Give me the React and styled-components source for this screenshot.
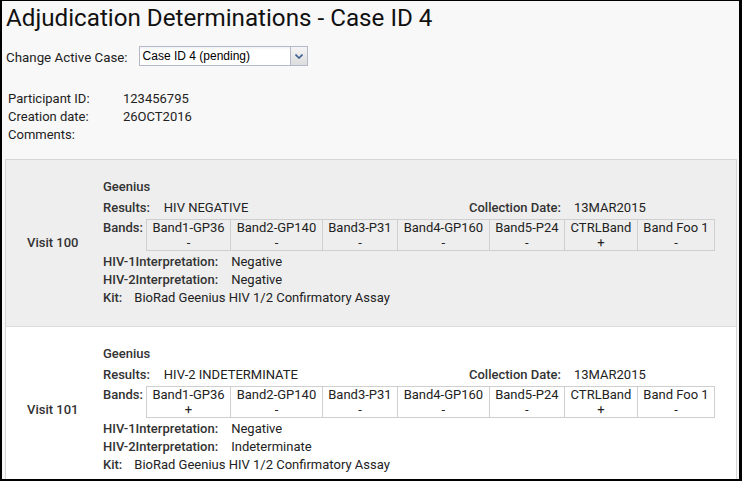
import React from "react";
import styled, { createGlobalStyle } from "styled-components";

const GlobalStyle = createGlobalStyle`
  html, body { margin: 0; padding: 0; background: #f8f8f8; }
  body { font-family: Roboto, "Noto Sans", sans-serif; color: #222; }
`;

const Frame = styled.div`
  width: 742px;
  height: 481px;
  box-sizing: border-box;
  border-left: 2px solid #000;
  border-top: 1px solid #000;
  border-right: 3px solid #000;
  border-bottom: 2px solid #000;
  background: #f8f8f8;
  overflow: hidden;
  padding: 0 0 0 3px;
`;

const Title = styled.h1`
  margin: 2px 0 0 1px;
  font-size: 24.2px;
  line-height: 30px;
  font-weight: 400;
  color: #111;
`;

const FormRow = styled.div`
  display: flex;
  align-items: center;
  gap: 11px;
  margin: 13px 0 0 1px;
  height: 20px;
`;

const FormLabel = styled.span`
  font-size: 13.33px;
  color: #222;
  padding-top: 2px;
`;

const Combo = styled.div`
  display: flex;
  height: 20px;
`;

const ComboInput = styled.div`
  width: 147px;
  height: 18px;
  border: 1px solid #b5b8c8;
  border-right: none;
  background: linear-gradient(#f2f2f2 0, #fff 3px, #fff 100%);
  font-family: "Liberation Sans", Arial, sans-serif;
  font-size: 12px;
  line-height: 18px;
  padding-left: 3px;
  color: #000;
`;

const ComboTrigger = styled.div`
  width: 16px;
  height: 18px;
  border: 1px solid #b5b8c8;
  background: linear-gradient(#f5f5f5, #dcdcdc);
  display: flex;
  align-items: center;
  justify-content: center;
`;

const Info = styled.div`
  margin: 24px 0 0 3px;
  display: grid;
  grid-template-columns: 115px auto;
  font-size: 13px;
  line-height: 18px;
  color: #222;
`;

const Panel = styled.div`
  margin-top: 15px;
  width: 732px;
  box-sizing: border-box;
  border: 1px solid #d6d6d6;
`;

const VisitRow = styled.div`
  display: grid;
  grid-template-columns: 97px 1fr;
  background: ${(p) => (p.$shaded ? "#eeeeee" : "#ffffff")};
  border-bottom: 1px solid #dcdcdc;
  padding: 18px 0 19px;
`;

const VisitLabel = styled.div`
  display: flex;
  align-items: center;
  padding-left: 21px;
  font-size: 13px;
  font-weight: 500;
  color: #333;
`;

const Details = styled.div`
  font-size: 13px;
  line-height: 18px;
  color: #222;
`;

const AssayName = styled.div`
  font-weight: 500;
  color: #333;
  margin-bottom: 3px;
`;

const Line = styled.div`
  display: flex;
  align-items: flex-start;
  margin-bottom: ${(p) => p.$mb || 0}px;
`;

const Pair = styled.div`
  display: flex;
  gap: ${(p) => p.$gap || 13}px;
  width: ${(p) => (p.$w ? p.$w + "px" : "auto")};
`;

const Label = styled.span`
  font-weight: 500;
  color: #333;
`;

const Value = styled.span`
  color: #222;
`;

const BandTable = styled.div`
  display: flex;
  margin-left: 3px;
  border: 1px solid #cfcfcf;
  border-right: none;
  background: ${(p) => (p.$shaded ? "#eeeeee" : "#ffffff")};
`;

const BandCell = styled.div`
  border-right: 1px solid #cfcfcf;
  padding: 0 5.5px;
  text-align: center;
  line-height: 15px;
  font-size: 13px;
  color: #222;
`;

const bandNames = [
  "Band1-GP36",
  "Band2-GP140",
  "Band3-P31",
  "Band4-GP160",
  "Band5-P24",
  "CTRLBand",
  "Band Foo 1",
];

const visits = [
  {
    visit: "Visit 100",
    result: "HIV NEGATIVE",
    date: "13MAR2015",
    bands: ["-", "-", "-", "-", "-", "+", "-"],
    hiv1: "Negative",
    hiv2: "Negative",
  },
  {
    visit: "Visit 101",
    result: "HIV-2 INDETERMINATE",
    date: "13MAR2015",
    bands: ["+", "-", "-", "-", "-", "+", "-"],
    hiv1: "Negative",
    hiv2: "Indeterminate",
  },
];

const Chevron = () => (
  <svg width="8" height="5" viewBox="0 0 8 5">
    <path d="M0.5 0.5 L4 4 L7.5 0.5" fill="none" stroke="#3e5f8f" strokeWidth="1.6" />
  </svg>
);

export default function App() {
  return (
    <>
      <GlobalStyle />
      <Frame>
        <Title>Adjudication Determinations - Case ID 4</Title>
        <FormRow>
          <FormLabel>Change Active Case:</FormLabel>
          <Combo>
            <ComboInput>Case ID 4 (pending)</ComboInput>
            <ComboTrigger>
              <Chevron />
            </ComboTrigger>
          </Combo>
        </FormRow>
        <Info>
          <span>Participant ID:</span>
          <span>123456795</span>
          <span>Creation date:</span>
          <span>26OCT2016</span>
          <span>Comments:</span>
          <span></span>
        </Info>
        <Panel>
          {visits.map((v, i) => (
            <VisitRow key={v.visit} $shaded={i === 0}>
              <VisitLabel>{v.visit}</VisitLabel>
              <Details>
                <AssayName>Geenius</AssayName>
                <Line $mb={2}>
                  <Pair $w={366} $gap={14}>
                    <Label>Results:</Label>
                    <Value>{v.result}</Value>
                  </Pair>
                  <Pair>
                    <Label>Collection Date:</Label>
                    <Value>{v.date}</Value>
                  </Pair>
                </Line>
                <Line $mb={2}>
                  <Label>Bands:</Label>
                  <BandTable $shaded={i === 0}>
                    {bandNames.map((b, j) => (
                      <BandCell key={b}>
                        <div>{b}</div>
                        <div>{v.bands[j]}</div>
                      </BandCell>
                    ))}
                  </BandTable>
                </Line>
                <Line>
                  <Pair>
                    <Label>HIV-1Interpretation:</Label>
                    <Value>{v.hiv1}</Value>
                  </Pair>
                </Line>
                <Line>
                  <Pair>
                    <Label>HIV-2Interpretation:</Label>
                    <Value>{v.hiv2}</Value>
                  </Pair>
                </Line>
                <Line>
                  <Pair $gap={12}>
                    <Label>Kit:</Label>
                    <Value>BioRad Geenius HIV 1/2 Confirmatory Assay</Value>
                  </Pair>
                </Line>
              </Details>
            </VisitRow>
          ))}
        </Panel>
      </Frame>
    </>
  );
}
